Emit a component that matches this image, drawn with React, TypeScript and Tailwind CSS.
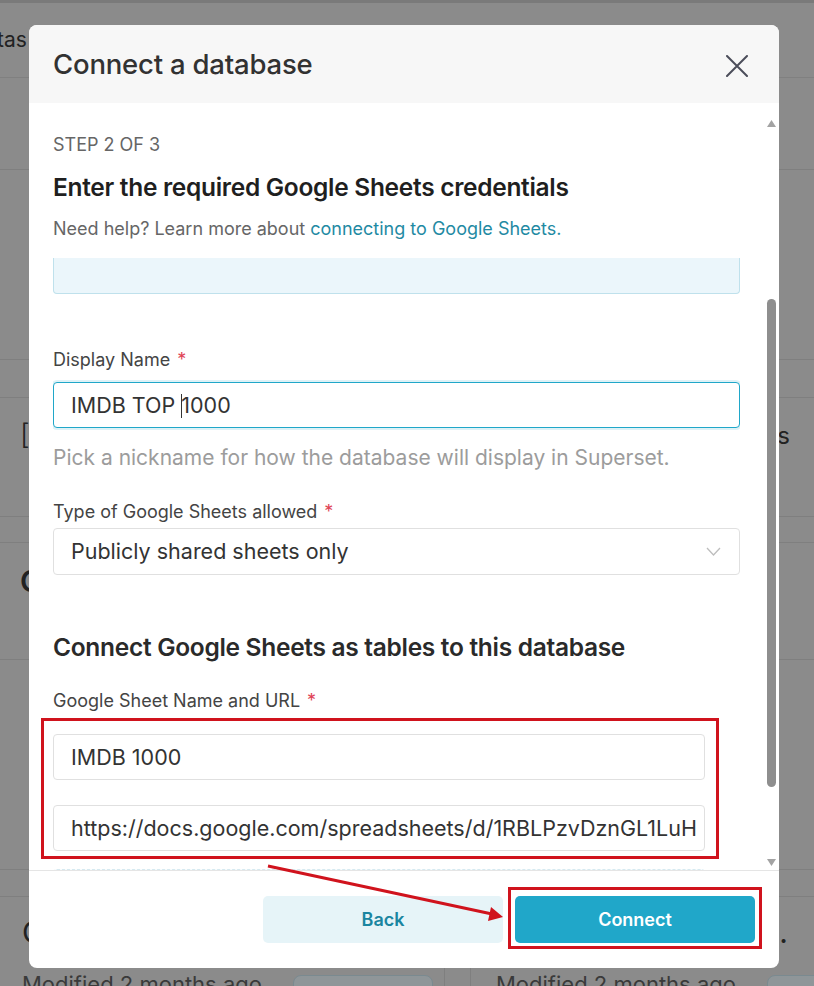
import React from "react";

const font = { fontFamily: "Inter, 'Noto Sans', sans-serif" };

function Req() {
  return <span className="ml-[7px] text-[#e04355]">*</span>;
}

function Background() {
  return (
    <div className="flex flex-col text-[#1c1c1c]">
      <div className="h-[3px] bg-[#7a7a7a]" />
      <div className="h-[75px] border-b border-[#808080] flex items-start pt-[24px]">
        <span className="text-[21px] leading-[26px] text-[#222] -ml-[3px]">tas</span>
      </div>
      <div className="h-[92px] border-b border-[#7f7f7f]" />
      <div className="h-[190px] border-b border-[#7f7f7f]" />
      <div className="h-[38px] border-b border-[#7f7f7f]" />
      <div className="h-[119px] border-b border-[#7f7f7f] flex items-start justify-between pl-[20px] pr-[24px] pt-[22px]">
        <span className="text-[28px] text-[#222] leading-none font-light">[</span>
        <span className="text-[24px] text-[#222] leading-none mt-[4px]">s</span>
      </div>
      <div className="h-[26px] border-b border-[#7f7f7f]" />
      <div className="h-[117px] border-b border-[#7f7f7f] flex items-center px-[20px] pb-[40px]">
        <span className="text-[30px] font-semibold text-[#222] leading-none">C</span>
      </div>
      <div className="h-[210px] border-b border-[#7f7f7f]" />
      <div className="h-[27px] border-b border-[#7f7f7f]" />
      <div className="flex h-[89px] gap-[25px]">
        <div className="w-[445px] shrink-0 border-r border-[#7f7f7f] flex flex-col pl-[22px]">
          <span className="text-[30px] leading-none mt-[20px] text-[#222]">C</span>
          <div className="flex items-start mt-[26px]">
            <span className="text-[22px] leading-none text-[#3a3a3a] whitespace-nowrap w-[271px] shrink-0">Modified 2 months ago</span>
            <div className="mt-[2px] w-[140px] h-[30px] shrink-0 rounded-[8px] border border-[#7a8a90] bg-[#8f9699]" />
          </div>
        </div>
        <div className="flex-1 min-w-0 border-l border-[#7f7f7f] flex flex-col pl-[25px]">
          <span className="text-[30px] leading-none mt-[20px] text-right text-[#222] pr-[26px]">.</span>
          <div className="flex items-start mt-[26px]">
            <span className="text-[22px] leading-none text-[#3a3a3a] whitespace-nowrap w-[271px] shrink-0">Modified 2 months ago</span>
            <div className="mt-[2px] w-[140px] h-[30px] shrink-0 rounded-[8px] border border-[#7a8a90] bg-[#8f9699]" />
          </div>
        </div>
      </div>
    </div>
  );
}

function Field({ children, focused }: { children: React.ReactNode; focused?: boolean }) {
  return (
    <div
      className={
        "h-[46px] rounded-[4px] bg-white flex items-center px-[17px] text-[21.5px] text-[#333] overflow-hidden " +
        (focused
          ? "border border-[#20a7c9] shadow-[0_0_0_2px_rgba(32,167,201,0.15)]"
          : "border border-[#e0e0e0]")
      }
    >
      {children}
    </div>
  );
}

export default function App() {
  return (
    <div className="relative w-[814px] h-[986px] overflow-hidden bg-[#8b8b8b]" style={font}>
      <Background />

      {/* Modal */}
      <div className="absolute left-[29px] top-[25px] w-[750px] h-[943px] bg-white rounded-[8px] overflow-hidden flex flex-col">
        <div className="h-[78px] bg-[#f7f7f7] flex items-center justify-between pl-[24px] pr-[31px] shrink-0">
          <span className="text-[27.5px] font-medium text-[#323232] tracking-[-0.2px] mt-[2px]">Connect a database</span>
          <svg width="22" height="22" viewBox="0 0 22 22" className="mt-[3px]">
            <path d="M1 1 L21 21 M21 1 L1 21" stroke="#4b4d5a" strokeWidth="2" strokeLinecap="round" />
          </svg>
        </div>

        <div className="flex-1 flex min-h-0">
          <div className="flex-1 flex flex-col pl-[24px] pr-[23px] min-w-0">
            <div className="pt-[30px] pb-[17px] shrink-0">
              <div className="text-[18px] leading-[24px] text-[#666]">STEP 2 OF 3</div>
              <div className="mt-[14px] text-[24.5px] leading-[32px] font-semibold text-[#1f1f1f] tracking-[-0.3px]">
                Enter the required Google Sheets credentials
              </div>
              <div className="mt-[14px] text-[18px] leading-[24px] text-[#666]">
                Need help? Learn more about <span className="text-[#1f8aa3]">connecting to Google Sheets.</span>
              </div>
            </div>

            <div className="flex-1 overflow-hidden min-h-0">
              <div className="h-[36px] bg-[#ebf6fb] border border-t-0 border-[#bfe1ec] rounded-b-[4px]" />

              <div className="mt-[54px] text-[18px] leading-[24px] text-[#444]">
                Display Name<Req />
              </div>
              <div className="mt-[10px]">
                <Field focused>
                  <span className="whitespace-pre">
                    IMDB TOP <span className="inline-block w-[1px] h-[24px] bg-[#333] align-middle -mr-[1px] -mt-[3px]" />1000
                  </span>
                </Field>
              </div>
              <div className="mt-[16px] text-[21px] leading-[28px] text-[#9c9c9c]">
                Pick a nickname for how the database will display in Superset.
              </div>

              <div className="mt-[28px] text-[18px] leading-[24px] text-[#444]">
                Type of Google Sheets allowed<Req />
              </div>
              <div className="mt-[4px]">
                <div className="h-[47px] rounded-[4px] bg-white border border-[#e0e0e0] flex items-center justify-between pl-[17px] pr-[18px] text-[21.5px] text-[#333]">
                  <span>Publicly shared sheets only</span>
                  <svg width="15" height="9" viewBox="0 0 15 9">
                    <path d="M1 1 L7.5 8 L14 1" fill="none" stroke="#bdbdbd" strokeWidth="1.3" />
                  </svg>
                </div>
              </div>

              <div className="mt-[56px] text-[24.5px] leading-[32px] font-semibold text-[#2a2a2a] tracking-[-0.3px]">
                Connect Google Sheets as tables to this database
              </div>
              <div className="mt-[26px] text-[18px] leading-[24px] text-[#444]">
                Google Sheet Name and URL<Req />
              </div>
              <div className="mt-[21px] w-[652px]">
                <Field>IMDB 1000</Field>
              </div>
              <div className="mt-[25px] w-[652px]">
                <Field>
                  <span className="whitespace-nowrap">
                    https://docs.google.com/spreadsheets/d/1RBLPzvDznGL1LuH
                  </span>
                </Field>
              </div>
              <div className="mt-[18px] w-[652px] h-[20px] rounded-[4px] border border-dashed border-[#d6e9f0] bg-[#f8fcfd]" />
            </div>
          </div>

          {/* Scrollbar */}
          <div className="w-[16px] shrink-0 flex flex-col items-start pt-[17px] pb-[4px]">
            <svg width="9" height="7" viewBox="0 0 9 7" className="ml-[4px]">
              <path d="M4.5 0 L9 7 L0 7 Z" fill="#a3a3a3" />
            </svg>
            <div className="mt-[172px] ml-[4px] w-[9px] h-[488px] rounded-full bg-[#8e8e8e]" />
            <div className="flex-1" />
            <svg width="9" height="7" viewBox="0 0 9 7" className="ml-[4px]">
              <path d="M0 0 L9 0 L4.5 7 Z" fill="#a3a3a3" />
            </svg>
          </div>
        </div>

        <div className="h-[98px] shrink-0 border-t border-[#e5e5e5] flex items-center justify-end gap-[12px] pr-[24px]">
          <div className="w-[240px] h-[47px] rounded-[5px] bg-[#e6f4f8] flex items-center justify-center text-[18px] font-semibold text-[#1a85a0]">
            Back
          </div>
          <div className="w-[240px] h-[47px] rounded-[5px] bg-[#20a7c9] flex items-center justify-center text-[18px] font-semibold text-white">
            Connect
          </div>
        </div>
      </div>

      {/* Annotations */}
      <div className="absolute left-[41px] top-[718px] w-[678px] h-[141px] border-[3px] border-[#d0131d]" />
      <div className="absolute left-[508px] top-[887px] w-[254px] h-[62px] border-[3px] border-[#d0131d]" />
      <svg className="absolute left-0 top-0" width="814" height="986" viewBox="0 0 814 986">
        <line x1="268" y1="866" x2="492" y2="914" stroke="#d0131d" strokeWidth="3" />
        <path d="M503 917 L488 921 L491 907 Z" fill="#d0131d" />
      </svg>
    </div>
  );
}
